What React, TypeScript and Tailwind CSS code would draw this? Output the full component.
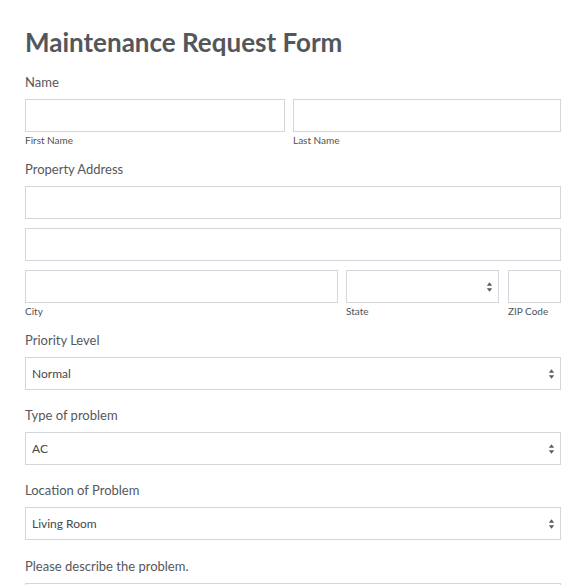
import React from "react";

const font = { fontFamily: "Lato, 'Open Sans', sans-serif" };

function Arrows() {
  return (
    <svg
      width="7"
      height="11"
      viewBox="0 0 7 11"
      className="pointer-events-none absolute right-[6px] top-1/2 -translate-y-1/2"
    >
      <path d="M3.5 0.8 L6.2 4.2 L0.8 4.2 Z" fill="#5a5d61" />
      <path d="M3.5 10.2 L6.2 6.8 L0.8 6.8 Z" fill="#5a5d61" />
    </svg>
  );
}

function Select({ value, options }: { value: string; options: string[] }) {
  return (
    <div className="relative h-[33px]">
      <select
        defaultValue={value}
        className="h-full w-full appearance-none border border-[#d3d6da] bg-white pl-[6px] text-[12px] text-[#45484c] outline-none"
        style={font}
      >
        {options.map((o) => (
          <option key={o}>{o}</option>
        ))}
      </select>
      <Arrows />
    </div>
  );
}

function Input() {
  return (
    <input
      type="text"
      className="block h-[33px] w-full border border-[#d3d6da] bg-white px-[6px] text-[12px] outline-none"
      style={font}
    />
  );
}

function Label({ children }: { children: React.ReactNode }) {
  return (
    <div className="mb-[7px] text-[13px] leading-[20px] text-[#55585c]">
      {children}
    </div>
  );
}

function Sub({ children }: { children: React.ReactNode }) {
  return (
    <div className="text-[10px] leading-[16px] text-[#4f5256]">{children}</div>
  );
}

export default function App() {
  return (
    <div className="min-h-[585px] bg-white pl-[25px] pr-[24px] pt-[26px]" style={font}>
      <h1 className="text-[26px] font-bold leading-[32px] text-[#53575c]">
        Maintenance Request Form
      </h1>

      <div className="mt-[14px]">
        <Label>Name</Label>
        <div className="grid grid-cols-[260px_1fr] gap-x-[8px]">
          <div>
            <Input />
            <Sub>First Name</Sub>
          </div>
          <div>
            <Input />
            <Sub>Last Name</Sub>
          </div>
        </div>
      </div>

      <div className="mt-[11px]">
        <Label>Property Address</Label>
        <div className="flex flex-col gap-[9px]">
          <Input />
          <Input />
          <div className="flex">
            <div className="w-[313px]">
              <Input />
              <Sub>City</Sub>
            </div>
            <div className="ml-[8px] w-[153px]">
              <div className="relative h-[33px]">
                <select
                  defaultValue=""
                  className="h-full w-full appearance-none border border-[#d3d6da] bg-white pl-[6px] text-[12px] outline-none"
                  style={font}
                >
                  <option value=""></option>
                </select>
                <Arrows />
              </div>
              <Sub>State</Sub>
            </div>
            <div className="ml-[9px] flex-1">
              <Input />
              <Sub>ZIP Code</Sub>
            </div>
          </div>
        </div>
      </div>

      <div className="mt-[11px]">
        <Label>Priority Level</Label>
        <Select value="Normal" options={["Low", "Normal", "High", "Urgent"]} />
      </div>

      <div className="mt-[15px]">
        <Label>Type of problem</Label>
        <Select value="AC" options={["AC", "Plumbing", "Electrical", "Appliance", "Other"]} />
      </div>

      <div className="mt-[15px]">
        <Label>Location of Problem</Label>
        <Select
          value="Living Room"
          options={["Living Room", "Kitchen", "Bedroom", "Bathroom", "Other"]}
        />
      </div>

      <div className="mt-[16px] pb-6">
        <Label>Please describe the problem.</Label>
        <textarea className="block h-[120px] w-full resize-none border border-[#d3d6da] bg-white outline-none" />
      </div>
    </div>
  );
}
